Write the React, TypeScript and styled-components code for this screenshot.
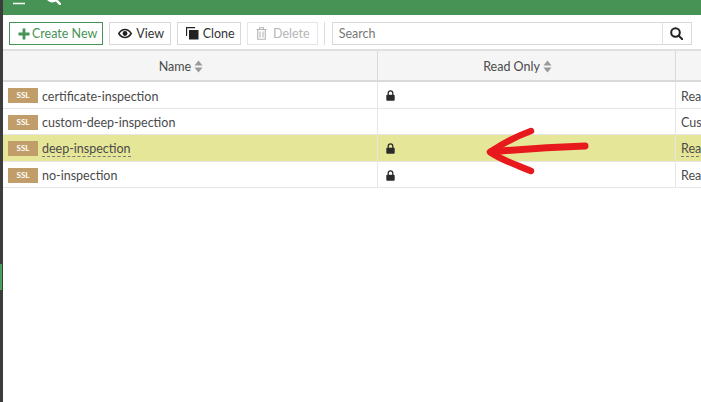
import React from 'react'
import styled, { createGlobalStyle } from 'styled-components'

const GlobalStyle = createGlobalStyle`
  html, body {
    margin: 0;
    padding: 0;
    background: #fff;
    overflow: hidden;
  }
  body {
    font-family: Lato, "Open Sans", sans-serif;
    font-size: 12.5px;
    color: #4a4a4a;
  }
`

const Page = styled.div`
  position: relative;
  display: flex;
  width: 701px;
  height: 402px;
  overflow: hidden;
`

const SideStrip = styled.div`
  width: 3px;
  flex: none;
  background: #3c3c3c;
  padding-top: 264px;
`

const SideAccent = styled.div`
  width: 2px;
  height: 26px;
  background: #47a05c;
`

const Main = styled.div`
  flex: 1;
  min-width: 0;
  display: flex;
  flex-direction: column;
`

const TopBar = styled.div`
  height: 15px;
  background: #479355;
  display: flex;
  align-items: flex-end;
  gap: 20px;
  padding: 0 0 0 10px;
  overflow: hidden;
  color: #fff;
`

const HamburgerIcon = styled.svg`
  flex: none;
  margin-bottom: 9px;
`

const TopSearch = styled.span`
  flex: none;
  display: flex;
  margin-bottom: 10px;
`

const Toolbar = styled.div`
  height: 36px;
  box-sizing: border-box;
  padding: 7px 0 0 6px;
  display: flex;
  align-items: flex-start;
  border-bottom: 2px solid #e0e0e0;
`

const Button = styled.button<{ $variant?: 'primary' | 'disabled' }>`
  height: 23px;
  box-sizing: border-box;
  margin: 0 6px 0 0;
  padding: 0 ${(p) => (p.$variant === 'primary' ? '5px' : p.$variant === 'disabled' ? '7px' : '5.5px')} 0 8px;
  display: flex;
  align-items: center;
  gap: ${(p) => (p.$variant === 'primary' ? '2px' : p.$variant === 'disabled' ? '6px' : '4px')};
  background: #fff;
  font: 12.5px Lato, sans-serif;
  border: 1px solid
    ${(p) => (p.$variant === 'primary' ? '#479355' : p.$variant === 'disabled' ? '#e6e6e6' : '#d8d8d8')};
  color: ${(p) => (p.$variant === 'primary' ? '#479355' : p.$variant === 'disabled' ? '#b5b5b5' : '#333')};
`

const Divider = styled.div`
  width: 1px;
  height: 23px;
  margin-right: 7px;
  background: #ddd;
`

const SearchBox = styled.div`
  width: 360px;
  height: 23px;
  box-sizing: border-box;
  display: flex;
  border: 1px solid #d8d8d8;
  background: #fff;
`

const SearchInput = styled.div`
  flex: 1;
  padding-left: 6px;
  line-height: 21px;
  color: #777;
`

const SearchButton = styled.div`
  width: 28px;
  display: flex;
  align-items: center;
  justify-content: center;
  border-left: 1px solid #e2e2e2;
  color: #222;
`

const Row = styled.div<{ $selected?: boolean }>`
  display: grid;
  grid-template-columns: 375px 298px 1fr;
  height: 26.5px;
  box-sizing: border-box;
  border-bottom: 1px solid #e6e6e6;
  background: ${(p) => (p.$selected ? '#e6e699' : '#fff')};
`

const HeaderRow = styled(Row)`
  height: 31px;
  background: #f5f5f5;
  border-bottom: 2px solid #d9d9d9;
`

const HeaderCell = styled.div`
  display: flex;
  align-items: center;
  justify-content: center;
  gap: 3px;
  padding: 2px 18px 0 0;
  border-right: 1px solid #d9d9d9;
  &:last-child {
    border-right: none;
  }
`

const Cell = styled.div`
  display: flex;
  align-items: center;
  min-width: 0;
  overflow: hidden;
  white-space: nowrap;
  padding: 2px 0 0 5px;
  border-right: 1px solid #e6e6e6;
  &:last-child {
    border-right: none;
  }
`

const Badge = styled.span`
  flex: none;
  width: 30px;
  height: 15px;
  margin-right: 4px;
  background: #c19e69;
  color: #fff;
  font-size: 8px;
  font-weight: 700;
  line-height: 15px;
  text-align: center;
`

const Name = styled.span<{ $dashed?: boolean }>`
  margin-top: 1px;
  ${(p) => (p.$dashed ? 'border-bottom: 1px dashed #777; line-height: 14px;' : '')}
`

const LockCell = styled(Cell)`
  padding-left: 8px;
  color: #2b2b2b;
`

const Arrow = styled.svg`
  position: absolute;
  left: 485px;
  top: 124px;
`

const PlusIcon = () => (
  <svg width="12" height="12" viewBox="0 0 12 12">
    <path d="M6 0.500v11M0.500 6h11" stroke="#479355" strokeWidth="2.800" />
  </svg>
)

const EyeIcon = () => (
  <svg width="14" height="11" viewBox="0 0 14 10">
    <path d="M0.800 5C2.400 2.400 4.500 1 7 1s4.600 1.400 6.200 4C11.600 7.600 9.500 9 7 9S2.400 7.600 0.800 5Z" fill="none" stroke="#222" strokeWidth="1.500" />
    <circle cx="7" cy="5" r="2.400" fill="#222" />
  </svg>
)

const CloneIcon = () => (
  <svg width="13" height="13" viewBox="0 0 13 13">
    <path d="M0.500 9V0.500H9" fill="none" stroke="#222" strokeWidth="1.300" />
    <rect x="3" y="3" width="9.500" height="9.500" fill="#222" />
  </svg>
)

const TrashIcon = () => (
  <svg width="11" height="13" viewBox="0 0 11 13" fill="none" stroke="#b5b5b5" strokeWidth="1.100">
    <path d="M0.500 2.500h10M3.500 2.500V0.800h4v1.700M1.700 2.500v9.800h7.600V2.500M4 4.500v6M7 4.500v6" />
  </svg>
)

const SearchIcon = ({ size = 13, weight = 2 }: { size?: number; weight?: number }) => (
  <svg width={size} height={size} viewBox="0 0 13 13" fill="none" stroke="currentColor" strokeWidth={weight}>
    <circle cx="5.500" cy="5.500" r="4.300" />
    <path d="M8.600 8.600l3.700 3.700" strokeLinecap="round" />
  </svg>
)

const SortIcon = () => (
  <svg width="9" height="13" viewBox="0 0 9 13" fill="#999">
    <path d="M4.500 0.500L8.500 5.500H0.500Z" />
    <path d="M4.500 12.500L0.500 7.500H8.500Z" />
  </svg>
)

const LockIcon = () => (
  <svg width="9" height="11" viewBox="0 0 9 11">
    <path d="M2.200 5V3.200a2.300 2.300 0 0 1 4.600 0V5" fill="none" stroke="currentColor" strokeWidth="1.300" />
    <rect x="0.300" y="4.700" width="8.400" height="6" rx="1" fill="currentColor" />
  </svg>
)

const rows = [
  { name: 'certificate-inspection', locked: true, comment: 'Read-only profile' },
  { name: 'custom-deep-inspection', locked: false, comment: 'Customizable' },
  { name: 'deep-inspection', locked: true, comment: 'Read-only profile', selected: true },
  { name: 'no-inspection', locked: true, comment: 'Read-only profile' },
]

export default function App() {
  return (
    <Page>
      <GlobalStyle />
      <SideStrip>
        <SideAccent />
      </SideStrip>
      <Main>
        <TopBar>
          <HamburgerIcon width="13" height="13" viewBox="0 0 13 13">
            <path d="M0 1h12M0 5.500h12M0 10.500h12" stroke="#fff" strokeWidth="1.500" />
          </HamburgerIcon>
          <TopSearch>
            <SearchIcon size={15} weight={2.200} />
          </TopSearch>
        </TopBar>
        <Toolbar>
          <Button $variant="primary">
            <PlusIcon />
            Create New
          </Button>
          <Button>
            <EyeIcon />
            View
          </Button>
          <Button>
            <CloneIcon />
            Clone
          </Button>
          <Button $variant="disabled">
            <TrashIcon />
            Delete
          </Button>
          <Divider />
          <SearchBox>
            <SearchInput>Search</SearchInput>
            <SearchButton>
              <SearchIcon />
            </SearchButton>
          </SearchBox>
        </Toolbar>
        <HeaderRow>
          <HeaderCell>
            Name <SortIcon />
          </HeaderCell>
          <HeaderCell>
            Read Only <SortIcon />
          </HeaderCell>
          <HeaderCell />
        </HeaderRow>
        {rows.map((row) => (
          <Row key={row.name} $selected={row.selected}>
            <Cell>
              <Badge>SSL</Badge>
              <Name $dashed={row.selected}>{row.name}</Name>
            </Cell>
            <LockCell>{row.locked && <LockIcon />}</LockCell>
            <Cell>
              <Name $dashed={row.selected}>{row.comment}</Name>
            </Cell>
          </Row>
        ))}
      </Main>
      <Arrow width="106" height="54" viewBox="0 0 106 54" fill="none" stroke="#e8191c" strokeLinecap="round" strokeLinejoin="round">
        <path d="M100 22C70 23 38 25 6 28" strokeWidth="7" />
        <path d="M46 7C32 12 17 20 5 28C16 36 32 41 46 47" strokeWidth="6.500" />
      </Arrow>
    </Page>
  )
}
